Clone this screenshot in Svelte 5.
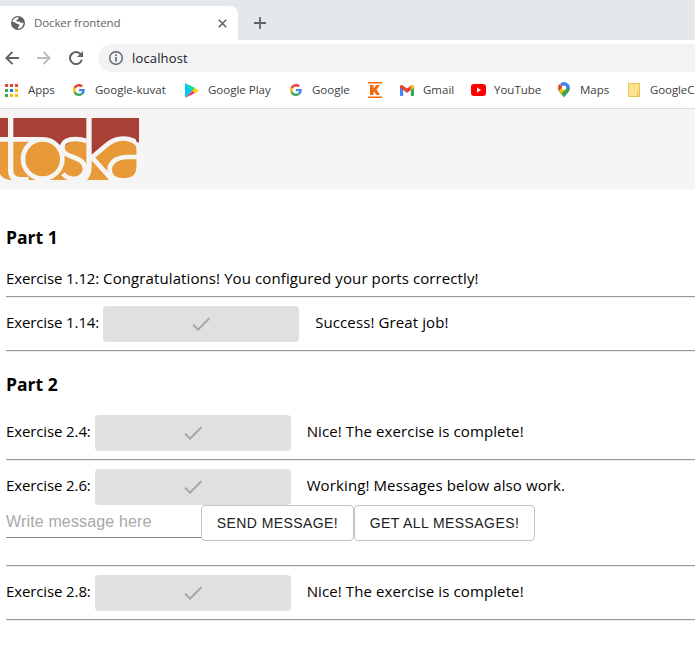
<script>
  const check = 'M9 16.17 4.83 12l-1.42 1.41L9 19 21 7l-1.41-1.41z';
  const dots = ['#ea4335', '#ea4335', '#ea4335', '#34a853', '#1a73e8', '#fbbc04', '#34a853', '#fbbc04', '#fbbc04'];
</script>

{#snippet google()}
  <svg width="12" height="12" viewBox="0 0 48 48">
    <path fill="#ea4335" d="M24 9.5c3.5 0 6.700 1.200 9.200 3.600l6.900-6.900C35.900 2.400 30.500 0 24 0 14.600 0 6.500 5.400 2.600 13.200l8 6.200C12.400 13.700 17.700 9.500 24 9.500z" />
    <path fill="#4285f4" d="M47 24.500c0-1.600-.2-3.100-.4-4.500H24v9h12.900c-.6 3-2.200 5.500-4.700 7.200l7.700 6C44.400 38 47 31.800 47 24.500z" />
    <path fill="#fbbc05" d="M10.500 28.600a14.500 14.500 0 0 1 0-9.200l-8-6.200a24 24 0 0 0 0 21.600z" />
    <path fill="#34a853" d="M24 48c6.500 0 11.900-2.100 15.900-5.800l-7.700-6c-2.200 1.500-4.900 2.300-8.200 2.300-6.300 0-11.600-4.200-13.500-9.900l-8 6.200C6.500 42.600 14.600 48 24 48z" />
  </svg>
{/snippet}

{#snippet done(label, message)}
  <div class="exercise">
    <span class="label">{label}</span>
    <button class="complete" disabled aria-label="Complete">
      <svg width="24" height="24" viewBox="0 0 24 24"><path d={check} /></svg>
    </button>
    <span class="message">{message}</span>
  </div>
{/snippet}

<div class="window">
  <div class="tabs">
    <div class="tab">
      <svg width="14" height="14" viewBox="0 0 14 14"><circle cx="7" cy="7" r="7" fill="#5f6368" /><path fill="#fff" d="M8 1.300C7 2 8 3 6.500 3.500S5 5 6 5.500s2-.5 3 .5 1.500 1 3.500.7C12.500 10 10 12.600 7 12.600V11c1.500-.5 2-1.500 1-2.500S5 8 4.500 7 2.500 6 1.400 6.200C1.700 3.400 4 1.300 8 1.300z" /><path fill="#5f6368" d="M8 2l2 1-.5 2h2.700L11 2z" /></svg>
      <span>Docker frontend</span>
      <svg class="close" width="9" height="9" viewBox="0 0 9 9"><path d="m.8.8 7.400 7.400m0-7.400L.8 8.200" stroke="#5f6368" stroke-width="1.600" /></svg>
    </div>
    <svg class="plus" width="12" height="12" viewBox="0 0 12 12"><path d="M6 0v12M0 6h12" stroke="#5f6368" stroke-width="1.800" /></svg>
  </div>
  <div class="toolbar">
    <svg width="14" height="14" viewBox="0 0 14 14"><path d="M14 7H1.500M7.500.8 1.300 7l6.200 6.200" fill="none" stroke="#5f6368" stroke-width="1.900" /></svg>
    <svg width="14" height="14" viewBox="0 0 14 14"><path d="M0 7h12.500M6.500.8 12.700 7l-6.200 6.200" fill="none" stroke="#babcbe" stroke-width="1.900" /></svg>
    <svg width="14" height="14" viewBox="0 0 14 14"><path d="M11.700 3.300A6 6 0 1 0 12.800 8.700" fill="none" stroke="#5f6368" stroke-width="2" /><path d="M14 0v6H8z" fill="#5f6368" /></svg>
    <div class="address">
      <svg width="14" height="14" viewBox="0 0 14 14"><circle cx="7" cy="7" r="6.300" fill="none" stroke="#5f6368" stroke-width="1.400" /><path d="M7 6v4.600M7 3.300v1.600" stroke="#5f6368" stroke-width="1.600" /></svg>
      <span>localhost</span>
    </div>
  </div>
  <div class="bookmarks">
    <div class="apps">{#each dots as c}<i style:background={c}></i>{/each}</div>
    <span style:width="45px">Apps</span>
    <div class="icon" style:width="22px">{@render google()}</div>
    <span style:width="90px">Google-kuvat</span>
    <div class="icon" style:width="23px"><svg width="14" height="15" viewBox="0 0 14 15"><path fill="#00c8f5" d="M0 0v15l7.500-7.500z" /><path fill="#00dc78" d="m0 0 10 5-2.500 2.500z" /><path fill="#f33d48" d="m0 15 10-5-2.500-2.500z" /><path fill="#ffd000" d="m10 5 4 2.500-4 2.500-2.500-2.500z" /></svg></div>
    <span style:width="82px">Google Play</span>
    <div class="icon" style:width="22px">{@render google()}</div>
    <span style:width="56px">Google</span>
    <div class="icon" style:width="32px"><svg width="14" height="16" viewBox="0 0 14 16"><path fill="#f26b0a" d="M0 0h14v1.500H0zM0 14.500h14V16H0zM2 3h3.500v3.500L8.500 3H12L8.500 7.500 12 13H8.500L6 9.500l-.5.600V13H2z" /></svg></div>
    <div class="icon" style:width="23px"><svg width="14" height="11" viewBox="0 0 14 11"><path fill="#4285f4" d="M0 2h3.200v9H1a1 1 0 0 1-1-1z" /><path fill="#34a853" d="M10.800 2H14v8a1 1 0 0 1-1 1h-2.200z" /><path fill="#ea4335" d="M0 3V1.500C0 0 1.700-.5 2.800.4L7 3.600 11.200.4 12 4 7 8 3.200 5z" /><path fill="#fbbc04" d="M10.800.7C12.500-.7 14 .2 14 1.500V3l-3.200 2.400z" /></svg></div>
    <span style:width="48px">Gmail</span>
    <div class="icon" style:width="23px"><svg width="15" height="12" viewBox="0 0 15 12"><rect width="15" height="12" rx="3" fill="red" /><path fill="#fff" d="M6 3.500v5L10 6z" /></svg></div>
    <span style:width="64px">YouTube</span>
    <div class="icon" style:width="22px"><svg width="12" height="16" viewBox="0 0 12 16"><path fill="#34a853" d="M6 16C5 13 0 10 0 6h12c0 4-5 7-6 10z" /><path fill="#4285f4" d="M2 1.700A6 6 0 0 1 12 6L6 7z" /><path fill="#ea4335" d="m1.500 2 4 3.500L1 9C-.5 6 0 3.500 1.500 2z" /><path fill="#fbbc04" d="M1 9 5 4l3 3-5 5z" /><circle cx="6" cy="5.800" r="2.200" fill="#fff" /></svg></div>
    <span style:width="48px">Maps</span>
    <div class="icon" style:width="22px"><svg width="13" height="14" viewBox="0 0 13 14"><path d="M.5.5h11v13H.5zM9.500 13.500V9.500h2" fill="#fde293" stroke="#e9c648" /></svg></div>
    <span class="last">GoogleC</span>
  </div>
  <header>
    <svg width="139" height="62" viewBox="0 39 417 186">
      <path fill="#a94036" d="M0 39h417v76l-50-12-90 55L190 119H0z" />
      <path fill="#e99a38" d="M0 104h80l48-2 58 28 40-30 40 4 9 54 65-50 45-5 25 20v62q-2 24-20 40H30Q8 222 0 207z" />
      <g fill="none" stroke="#f5f5f5" stroke-width="14">
        <path d="M0 103h125" />
        <path stroke-width="16" d="M32 36v160q0 28 28 28h26M267 36v150q0 34-30 44" />
        <circle cx="128" cy="162" r="59" />
        <path d="M260 108c-34-12-73-6-73 20 0 34 66 22 68 62 0 34-44 42-66 16" />
        <path d="M273 160l44-38c30-26 62-24 83-15q16 8 17 26M275 156l66 74M417 156h-34c-38 0-54 20-54 38 0 20 16 32 40 32 24 0 48-8 48-38V120" />
      </g>
      <path fill="#a94036" d="M408 90h9v24l-9-5z" />
    </svg>
  </header>
  <main>
    <h3>Part 1</h3>
    <p><span class="lead">Exercise 1.12:</span> Congratulations! You configured your ports correctly!</p>
    <hr />
    {@render done('Exercise 1.14:', 'Success! Great job!')}
    <hr />
    <h3 class="second">Part 2</h3>
    {@render done('Exercise 2.4:', 'Nice! The exercise is complete!')}
    <hr />
    {@render done('Exercise 2.6:', 'Working! Messages below also work.')}
    <div class="form">
      <input placeholder="Write message here" aria-label="Message" />
      <button class="send">SEND MESSAGE!</button>
      <button class="get">GET ALL MESSAGES!</button>
    </div>
    <hr />
    {@render done('Exercise 2.8:', 'Nice! The exercise is complete!')}
    <hr />
  </main>
</div>

<style>
  .window { width: 695px; height: 645px; overflow: hidden; background: #fff; font-family: 'Open Sans', 'Noto Sans', sans-serif; color: #000; }
  svg { display: block; flex: none; }
  .tabs { height: 40px; background: #e5e8eb; display: flex; align-items: flex-end; box-sizing: border-box; }
  .tab { width: 238px; height: 34px; background: #fff; border-radius: 0 8px 0 0; display: flex; align-items: center; padding: 0 11px; box-sizing: border-box; font-size: 11.500px; letter-spacing: -.12px; color: #5f6368; }
  .tab span { margin: -2px 0 0 9px; white-space: nowrap; }
  .close { margin-left: auto; }
  .plus { margin: 0 0 11px 16px; }
  .toolbar { height: 36px; display: flex; align-items: center; gap: 18px; padding-left: 5px; }
  .address { flex: 1; height: 28px; margin-left: -3px; border-radius: 14px 0 0 14px; background: #f1f3f4; display: flex; align-items: center; padding-left: 11px; gap: 9px; font-size: 13px; letter-spacing: .15px; color: #202124; }
  .bookmarks { height: 33px; border-bottom: 1px solid #dadce0; display: flex; align-items: center; padding: 0 0 4px 5px; box-sizing: border-box; font-size: 11.500px; color: #3c4043; white-space: nowrap; }
  .bookmarks > * { flex: none; }
  .bookmarks span { display: block; margin-top: -2px; }
  .bookmarks .last { letter-spacing: -.1px; }
  .apps { width: 23px; display: grid; grid-template-columns: repeat(3, 3px); gap: 2px; }
  .apps i { height: 3px; }
  header { height: 80px; background: #f5f5f5; padding-top: 9px; box-sizing: border-box; }
  main { padding-left: 6px; font-size: 15px; }
  h3 { margin: 0 0 1px; padding-top: 35px; height: 26px; line-height: 26px; font-size: 17.500px; }
  h3.second { padding-top: 19px; margin-bottom: 18px; }
  p { margin: 16px 0 6px; line-height: 24px; height: 24px; white-space: nowrap; letter-spacing: .1px; }
  .lead { letter-spacing: -.12px; }
  hr { margin: 0; border: 0; height: 1px; background: #9a9a9a; border-bottom: 1px solid #eee; }
  .exercise { display: flex; height: 36px; white-space: nowrap; align-items: center; }
  hr + .exercise { margin-top: 8px; }
  .exercise + hr { margin-top: 8px; }
  .label { padding-right: 4px; line-height: 32px; height: 36px; letter-spacing: -.12px; }
  .message { margin-left: 16px; height: 36px; line-height: 32px; letter-spacing: .11px; }
  .complete { width: 196px; height: 36px; border: 0; border-radius: 4px; background: #e0e0e0; display: flex; align-items: center; justify-content: center; padding: 0; }
  .complete svg { fill: #a6a6a6; }
  .form { display: flex; height: 36px; margin-bottom: 24px; }
  input { width: 195px; height: 33px; box-sizing: border-box; padding: 1px 0 0; border: 0; border-bottom: 1px solid #8a8a8a; font: 16px 'Liberation Sans', sans-serif; letter-spacing: .15px; }
  input::placeholder { color: #a9a9a9; opacity: 1; }
  .form button { height: 36px; box-sizing: border-box; border: 1px solid #c4c4c4; border-radius: 4px; background: #fff; padding: 0; font: 14px 'Liberation Sans', sans-serif; letter-spacing: .42px; color: #212121; white-space: nowrap; }
  .send { width: 153px; }
  .get { width: 181px; }
</style>
